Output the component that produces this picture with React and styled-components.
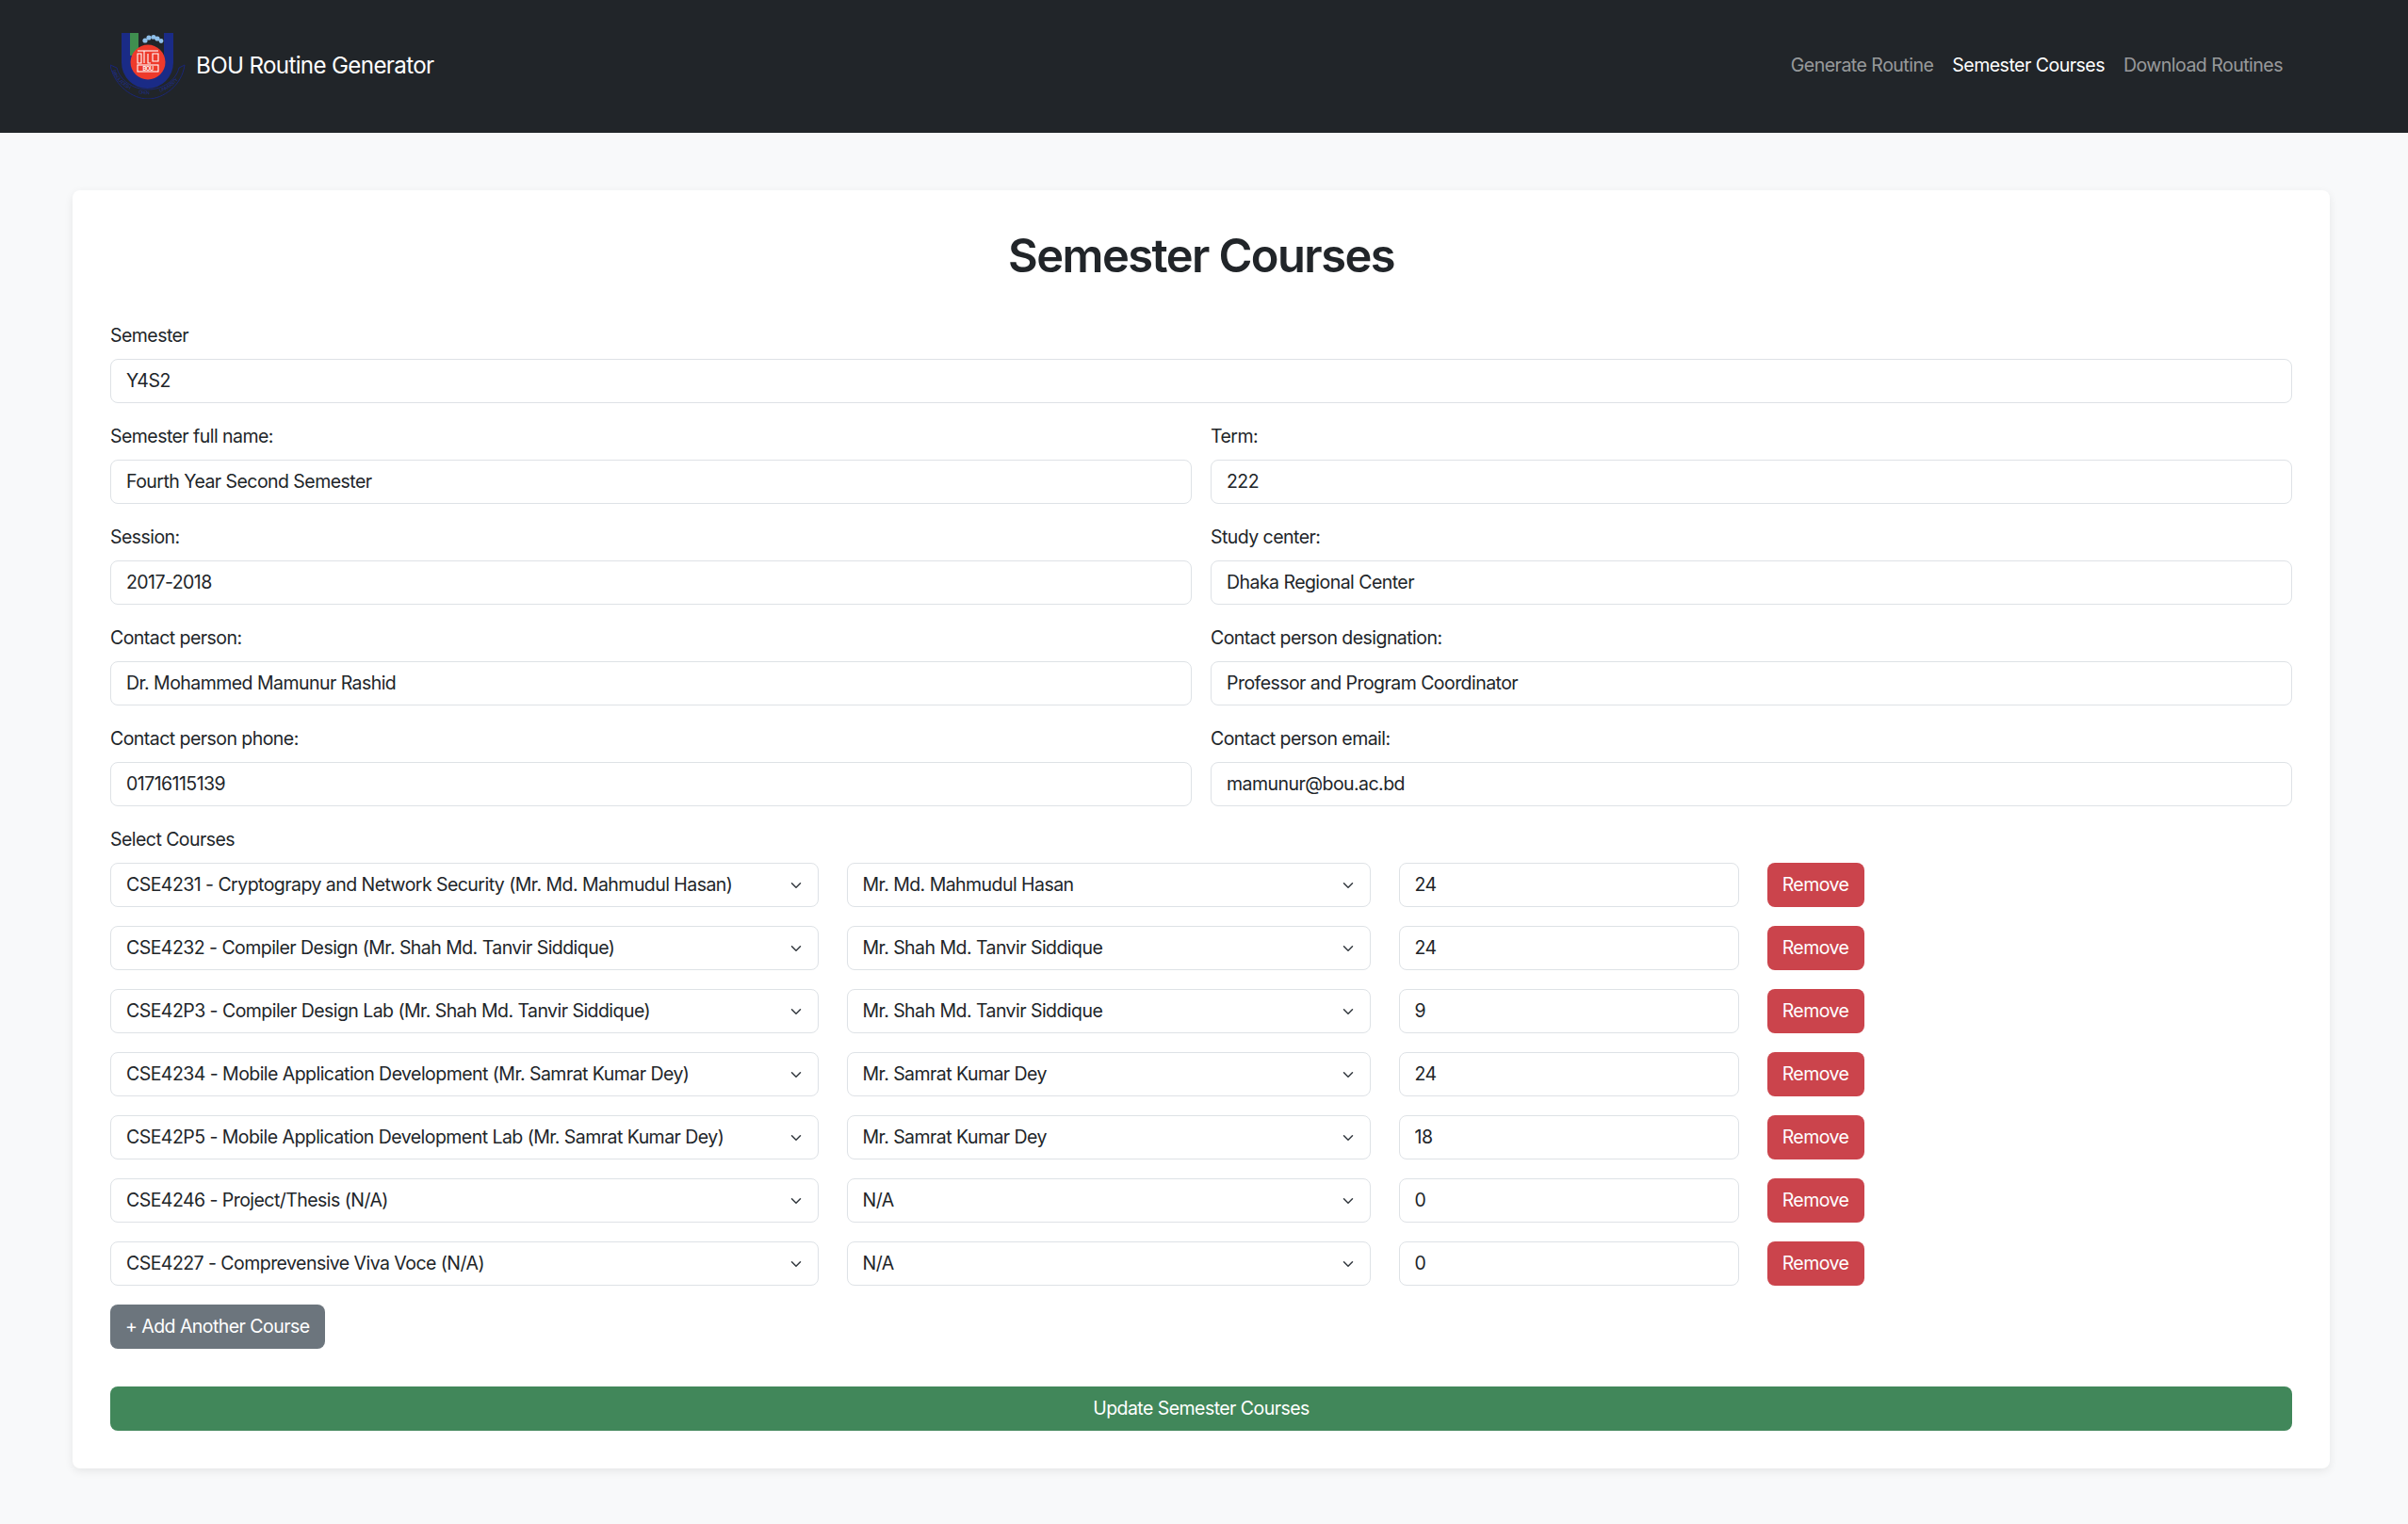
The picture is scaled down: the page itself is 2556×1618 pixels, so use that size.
import React from "react";
import styled, { createGlobalStyle } from "styled-components";

const GlobalStyle = createGlobalStyle`
  * { box-sizing: border-box; }
  html, body { margin: 0; padding: 0; }
  body {
    background: #f8f9fa;
    color: #212529;
    font-family: Inter, "Liberation Sans", sans-serif;
    font-size: 19.5px;
    line-height: 1.5;
    letter-spacing: -0.028em;
  }
`;

const Navbar = styled.nav`
  display: flex;
  align-items: center;
  justify-content: space-between;
  height: 141px;
  padding: 0 133px 2px 117px;
  background: #212529;
`;

const Brand = styled.a`
  display: flex;
  align-items: center;
  gap: 11px;
  color: #fff;
  font-size: 24.2px;
  letter-spacing: -0.028em;
  text-decoration: none;
`;

const BrandName = styled.span`
  padding-top: 2px;
`;

const NavLinks = styled.div`
  display: flex;
  gap: 20px;
`;

const NavLink = styled.a`
  color: ${(p) => (p.$active ? "#fff" : "rgba(255, 255, 255, 0.55)")};
  letter-spacing: -0.026em;
  text-decoration: none;
`;

const Main = styled.main`
  padding: 61px 83px 59px 77px;
`;

const Card = styled.form`
  padding: 40px;
  background: #fff;
  border-radius: 8px;
  box-shadow: 0 3px 10px rgba(0, 0, 0, 0.08);
`;

const Title = styled.h1`
  margin: 1px 0 39px;
  font-size: 48.8px;
  font-weight: 600;
  letter-spacing: -0.032em;
  line-height: 1.2;
  text-align: center;
`;

const FieldGrid = styled.div`
  display: grid;
  grid-template-columns: 1fr 1fr;
  column-gap: 20px;
`;

const Field = styled.div`
  grid-column: ${(p) => (p.$wide ? "1 / -1" : "auto")};
  margin-bottom: 20px;
`;

const Label = styled.label`
  display: block;
  height: 30px;
  margin-bottom: 10px;
  line-height: 30px;
`;

const TextInput = styled.input`
  display: block;
  width: 100%;
  height: 47px;
  padding: 0 16px;
  color: #212529;
  background: #fff;
  border: 1.5px solid #dee2e6;
  border-radius: 8px;
  font: inherit;
  letter-spacing: -0.028em;
  outline: none;
`;

const CourseRow = styled.div`
  display: grid;
  grid-template-columns: 751.5px 556px 361px 103px;
  column-gap: 30px;
  margin-bottom: 20px;
`;

const SelectWrap = styled.div`
  position: relative;
`;

const Select = styled.select`
  display: block;
  width: 100%;
  height: 47px;
  padding: 2px 40px 0 16px;
  color: #212529;
  background: #fff;
  border: 1.5px solid #dee2e6;
  border-radius: 8px;
  font: inherit;
  letter-spacing: -0.028em;
  appearance: none;
  outline: none;
`;

const Chevron = styled.svg`
  position: absolute;
  top: 18px;
  right: 17.5px;
  width: 12px;
  height: 12px;
  pointer-events: none;
`;

const Button = styled.button`
  display: block;
  width: ${(p) => (p.$block ? "100%" : "auto")};
  height: 47px;
  padding: 2px 16px 0;
  color: #fff;
  background: ${(p) => p.$bg};
  border: 0;
  border-radius: 8px;
  font: inherit;
  letter-spacing: -0.028em;
`;

const AddWrap = styled.div`
  margin-bottom: 40px;
`;

const courses = [
  { code: "CSE4231 - Cryptograpy and Network Security (Mr. Md. Mahmudul Hasan)", teacher: "Mr. Md. Mahmudul Hasan", credit: "24" },
  { code: "CSE4232 - Compiler Design (Mr. Shah Md. Tanvir Siddique)", teacher: "Mr. Shah Md. Tanvir Siddique", credit: "24" },
  { code: "CSE42P3 - Compiler Design Lab (Mr. Shah Md. Tanvir Siddique)", teacher: "Mr. Shah Md. Tanvir Siddique", credit: "9" },
  { code: "CSE4234 - Mobile Application Development (Mr. Samrat Kumar Dey)", teacher: "Mr. Samrat Kumar Dey", credit: "24" },
  { code: "CSE42P5 - Mobile Application Development Lab (Mr. Samrat Kumar Dey)", teacher: "Mr. Samrat Kumar Dey", credit: "18" },
  { code: "CSE4246 - Project/Thesis (N/A)", teacher: "N/A", credit: "0" },
  { code: "CSE4227 - Comprevensive Viva Voce (N/A)", teacher: "N/A", credit: "0" },
];

const fields = [
  ["Semester full name:", "Fourth Year Second Semester"],
  ["Term:", "222"],
  ["Session:", "2017-2018"],
  ["Study center:", "Dhaka Regional Center"],
  ["Contact person:", "Dr. Mohammed Mamunur Rashid"],
  ["Contact person designation:", "Professor and Program Coordinator"],
  ["Contact person phone:", "01716115139"],
  ["Contact person email:", "mamunur@bou.ac.bd"],
];

const Logo = () => (
  <svg width="80" height="70" viewBox="0 0 80 70">
    <defs>
      <path id="bou-left" d="M2 40 C 6 50, 14 58, 27 63" fill="none" />
      <path id="bou-mid" d="M27 63 C 35 66, 45 66, 53 63" fill="none" />
      <path id="bou-right" d="M53 63 C 66 58, 74 50, 78 40" fill="none" />
    </defs>
    <g fill="none" stroke="#1a2676" strokeWidth="1">
      <path d="M0 34 C 4 56 24 70 40 70 C 56 70 76 56 79 34 L 73 37 C 70 50 56 60 40 60 C 24 60 10 50 7 37 Z" />
    </g>
    <g fontFamily="Inter, sans-serif" fontSize="5" fill="#1f2d86">
      <text><textPath href="#bou-left">BANGLADESH</textPath></text>
      <text><textPath href="#bou-mid" startOffset="12%">OPEN</textPath></text>
      <text><textPath href="#bou-right">UNIVERSITY</textPath></text>
    </g>
    <path d="M12 0 H67 V31.5 A27.5 27.5 0 0 1 12 31.5 Z" fill="#1a2b86" />
    <rect x="21" y="0" width="9" height="24" fill="#3f8f4f" />
    <rect x="30" y="0" width="27" height="26" fill="#212529" />
    <g fill="#8fc0ea">
      <circle cx="37" cy="8" r="2.6" />
      <circle cx="41" cy="5" r="2.6" />
      <circle cx="46" cy="4.5" r="2.6" />
      <circle cx="50" cy="6" r="2.6" />
      <circle cx="54" cy="8.5" r="2.4" />
    </g>
    <path d="M44 12 V6 M40 11 L44 7 M48 12 L46 6" stroke="#212529" strokeWidth="0.8" />
    <circle cx="40" cy="31" r="18.5" fill="#ee3a2b" />
    <g fill="none" stroke="#fff" strokeWidth="1.1">
      <path d="M29 19 H51" />
      <path d="M29 22 H33 V32 H29 Z M36 19 V32 M40 22 V32 H43 M45 22 H51 V30 H45 Z" />
      <rect x="29" y="34" width="22" height="7" />
    </g>
    <text x="40" y="39.8" fill="#fff" fontFamily="Inter, sans-serif" fontSize="6" fontWeight="600" textAnchor="middle">BOU</text>
  </svg>
);

function App() {
  return (
    <>
      <GlobalStyle />
      <Navbar>
        <Brand href="#">
          <Logo />
          <BrandName>BOU Routine Generator</BrandName>
        </Brand>
        <NavLinks>
          <NavLink href="#">Generate Routine</NavLink>
          <NavLink href="#" $active>Semester Courses</NavLink>
          <NavLink href="#">Download Routines</NavLink>
        </NavLinks>
      </Navbar>
      <Main>
        <Card>
          <Title>Semester Courses</Title>
          <FieldGrid>
            <Field $wide>
              <Label>Semester</Label>
              <TextInput defaultValue="Y4S2" />
            </Field>
            {fields.map(([label, value]) => (
              <Field key={label}>
                <Label>{label}</Label>
                <TextInput defaultValue={value} />
              </Field>
            ))}
          </FieldGrid>
          <Label>Select Courses</Label>
          {courses.map((c) => (
            <CourseRow key={c.code}>
              <SelectWrap>
                <Select defaultValue={c.code}>
                  <option>{c.code}</option>
                </Select>
                <Chevron viewBox="0 0 16 16" fill="none" stroke="#343a40" strokeWidth="2" strokeLinecap="round" strokeLinejoin="round">
                  <path d="m2 5 6 6 6-6" />
                </Chevron>
              </SelectWrap>
              <SelectWrap>
                <Select defaultValue={c.teacher}>
                  <option>{c.teacher}</option>
                </Select>
                <Chevron viewBox="0 0 16 16" fill="none" stroke="#343a40" strokeWidth="2" strokeLinecap="round" strokeLinejoin="round">
                  <path d="m2 5 6 6 6-6" />
                </Chevron>
              </SelectWrap>
              <TextInput defaultValue={c.credit} />
              <Button type="button" $bg="#cb444c">Remove</Button>
            </CourseRow>
          ))}
          <AddWrap>
            <Button type="button" $bg="#6c757d">+ Add Another Course</Button>
          </AddWrap>
          <Button type="submit" $block $bg="#41875a">Update Semester Courses</Button>
        </Card>
      </Main>
    </>
  );
}

export default App;
